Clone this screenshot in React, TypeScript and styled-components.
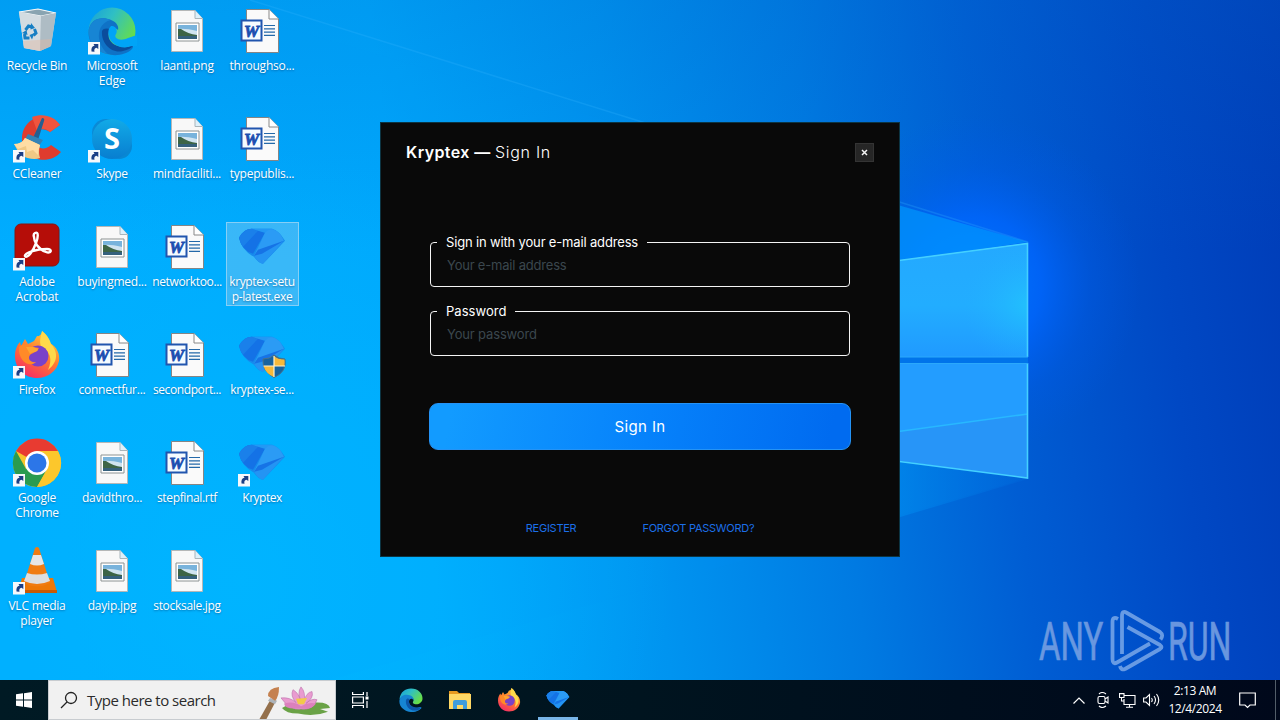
import * as React from 'react';
import styled, { createGlobalStyle } from 'styled-components';

const GlobalStyle = createGlobalStyle`
    html, body, #root {
        margin: 0;
        width: 1280px;
        height: 720px;
        overflow: hidden;
    }

    * {
        box-sizing: border-box;
    }
`;

const Screen = styled.div`
    position: relative;
    display: flex;
    flex-direction: column;
    width: 1280px;
    height: 720px;
    overflow: hidden;
    font-family: 'Open Sans', 'Noto Sans', sans-serif;
    isolation: isolate;
`;

const WallpaperSvg = styled.svg`
    position: absolute;
    inset: 0;
    z-index: -1;
`;

const Desktop = styled.main`
    position: relative;
    flex: 1;
    min-height: 0;
`;

const IconGrid = styled.div`
    display: grid;
    grid-template-columns: repeat(4, 75px);
    grid-template-rows: repeat(6, 108px);
    grid-auto-flow: column;
    width: 300px;
`;

const IconCell = styled.div<{ $selected?: boolean }>`
    display: flex;
    flex-direction: column;
    align-items: center;
    justify-self: center;
    width: 73px;
    height: 84px;
    margin: 6px 0 0 -1px;
    padding-top: 1px;
    ${props => props.$selected ? `
        background: rgba(135, 200, 240, 0.42);
        box-shadow: inset 0 0 0 1px rgba(160, 215, 245, 0.75);
    ` : ''}
`;

const IconLabel = styled.div<{ $spacing?: number }>`
    width: 76px;
    margin-top: 3px;
    color: #ffffff;
    font-size: 12px;
    line-height: 15px;
    letter-spacing: ${props => props.$spacing ?? -0.2}px;
    text-align: center;
    white-space: pre;
    text-shadow: 0 1px 2px rgba(0, 40, 90, 0.45);
`;

const Watermark = styled.svg`
    position: absolute;
    left: 1034px;
    top: 594px;
`;

const Dialog = styled.section`
    position: absolute;
    left: 380px;
    top: 122px;
    display: flex;
    flex-direction: column;
    width: 520px;
    height: 435px;
    padding: 19px 25px 0;
    border: 1px solid #0c3442;
    background: #090909;
    color: #ffffff;
    font-family: 'Inter', 'Open Sans', sans-serif;
`;

const DialogHeader = styled.header`
    display: flex;
    align-items: center;
    justify-content: space-between;
    height: 20px;
`;

const DialogTitle = styled.h1`
    margin: 0;
    font-size: 16px;
    font-weight: 600;
    line-height: 20px;
    letter-spacing: 0.4px;
    white-space: nowrap;
`;

const TitleAction = styled.span`
    font-weight: 300;
    letter-spacing: 0.7px;
`;

const CloseButton = styled.button`
    display: flex;
    align-items: center;
    justify-content: center;
    width: 19px;
    height: 19px;
    padding: 0;
    border: 1px solid #343434;
    background: #262626;
`;

const Form = styled.form`
    display: flex;
    flex-direction: column;
    margin: 72px 23px 0;
`;

const Field = styled.fieldset`
    height: 53px;
    min-width: 0;
    margin: 0 1px 16px;
    padding: 0 16px 0 6px;
    border: 1px solid #f4f4f4;
    border-radius: 4px;
`;

const Legend = styled.legend<{ $spacing: number }>`
    height: 17px;
    padding: 0 9px;
    font-size: 13px;
    line-height: 16px;
    letter-spacing: ${props => props.$spacing}px;
`;

const Input = styled.input<{ $spacing: number }>`
    display: block;
    width: 100%;
    height: 20px;
    margin-top: 4px;
    padding: 0 0 0 10px;
    border: 0;
    outline: 0;
    background: transparent;
    color: #ffffff;
    font-family: inherit;
    font-size: 13px;
    letter-spacing: ${props => props.$spacing}px;

    &::placeholder {
        color: #3b474e;
        opacity: 1;
    }
`;

const SubmitButton = styled.button`
    height: 47px;
    margin-top: 31px;
    padding: 0;
    border: 1px solid #2593f5;
    border-radius: 9px;
    background: linear-gradient(100deg, #129bff 5%, #0682fb 52%, #006bf0 95%);
    color: #ffffff;
    font-family: inherit;
    font-size: 15px;
    letter-spacing: 0.4px;
`;

const DialogLinks = styled.nav`
    display: flex;
    justify-content: center;
    gap: 66px;
    margin-top: 71px;
`;

const DialogLink = styled.a<{ $spacing: number }>`
    color: #1c6fe8;
    font-size: 11px;
    line-height: 14px;
    letter-spacing: ${props => props.$spacing}px;
`;

const Taskbar = styled.footer`
    display: flex;
    align-items: stretch;
    height: 40px;
    background: linear-gradient(90deg, #001a24, #00141f 50%, #00081b);
    color: #ffffff;
`;

const StartButton = styled.div`
    display: flex;
    align-items: center;
    justify-content: center;
    width: 48px;
`;

const SearchBox = styled.div`
    display: flex;
    align-items: center;
    width: 288px;
    padding-left: 11px;
    border: 1px solid #c8ccd0;
    background: #f1f1f1;
    color: #2b2b2b;
`;

const SearchText = styled.span`
    width: 172px;
    margin-left: 9px;
    font-size: 15px;
    letter-spacing: -0.5px;
    white-space: nowrap;
`;

const SearchArt = styled.svg`
    align-self: flex-end;
`;

const TaskButton = styled.div<{ $active?: boolean, $wide?: boolean }>`
    display: flex;
    align-items: center;
    justify-content: center;
    width: ${props => props.$active ? 40 : 49}px;
    margin-left: ${props => props.$active ? 5 : 0}px;
    margin-right: ${props => props.$wide ? 1 : 0}px;
    box-shadow: ${props => props.$active ? 'inset 0 -3px #78b5e8' : 'none'};
`;

const Tray = styled.div`
    display: flex;
    align-items: center;
    margin-left: auto;
`;

const TrayIcon = styled.div<{ $width: number }>`
    display: flex;
    align-items: center;
    justify-content: center;
    width: ${props => props.$width}px;
`;

const Clock = styled.div`
    width: 64px;
    font-size: 12px;
    line-height: 18px;
    letter-spacing: -0.4px;
    text-align: center;
`;

const ShowDesktop = styled.div`
    width: 5px;
    height: 40px;
    margin-left: 8px;
    border-left: 1px solid #525d69;
`;

const Wallpaper = () => (
    <WallpaperSvg width="1280" height="720" viewBox="0 0 1280 720">
        <defs>
            <linearGradient id="sky" gradientUnits="userSpaceOnUse" x1="0" y1="0" x2="1300" y2="-150">
                <stop offset="0" stopColor="#00aeff" />
                <stop offset=".28" stopColor="#00a9fd" />
                <stop offset=".45" stopColor="#0094f0" />
                <stop offset=".6" stopColor="#007ae2" />
                <stop offset=".73" stopColor="#005dd3" />
                <stop offset=".86" stopColor="#0048c4" />
                <stop offset="1" stopColor="#0039b4" />
            </linearGradient>
            <linearGradient id="skyShade" x1="0" y1="0" x2="0" y2="1">
                <stop offset="0" stopColor="#0067c8" stopOpacity=".22" />
                <stop offset=".35" stopColor="#0067c8" stopOpacity="0" />
            </linearGradient>
            <radialGradient id="leftGlow" gradientUnits="userSpaceOnUse" cx="240" cy="580" r="430">
                <stop offset="0" stopColor="#00b8ff" stopOpacity=".85" />
                <stop offset="1" stopColor="#00b8ff" stopOpacity="0" />
            </radialGradient>
            <radialGradient id="windowGlow" gradientUnits="userSpaceOnUse" cx="0" cy="0" r="1" gradientTransform="translate(975 285) scale(165 170)">
                <stop offset="0" stopColor="#0078ff" />
                <stop offset=".4" stopColor="#0066ff" stopOpacity=".8" />
                <stop offset=".7" stopColor="#005cf0" stopOpacity=".3" />
                <stop offset="1" stopColor="#0058e8" stopOpacity="0" />
            </radialGradient>
            <linearGradient id="topPane" x1="0" y1="0" x2="0" y2="1">
                <stop offset="0" stopColor="#24a9ff" />
                <stop offset=".55" stopColor="#22adff" />
                <stop offset="1" stopColor="#209aff" />
            </linearGradient>
            <radialGradient id="paneGlow" gradientUnits="userSpaceOnUse" cx="1028" cy="305" r="65">
                <stop offset="0" stopColor="#22c8fc" stopOpacity=".7" />
                <stop offset="1" stopColor="#22b0ff" stopOpacity="0" />
            </radialGradient>
            <linearGradient id="lowerRay" gradientUnits="userSpaceOnUse" x1="890" y1="0" x2="1028" y2="0">
                <stop offset="0" stopColor="#0091f2" stopOpacity=".55" />
                <stop offset="1" stopColor="#0078e8" stopOpacity=".15" />
            </linearGradient>
        </defs>
        <rect width="1280" height="720" fill="url(#sky)" />
        <rect width="1280" height="720" fill="url(#skyShade)" />
        <rect width="1280" height="720" fill="url(#leftGlow)" />
        <rect width="1280" height="720" fill="url(#windowGlow)" />
        <path d="M190 0L1028 242V478L330 680H0V0Z" fill="#00a4ff" opacity=".05" />
        <path d="M880 200L1028 242L880 264Z" fill="#009cff" opacity=".6" />
        <path d="M880 458L1028 479L880 523Z" fill="url(#lowerRay)" />
        <path d="M250 0L1028 242" stroke="#35b5ff" strokeWidth="1.5" opacity=".25" />
        <path d="M880 262L1028 243V478L880 458Z" fill="#0074ea" />
        <path d="M880 263L1028 243V357H880Z" fill="url(#topPane)" />
        <path d="M880 263L1028 243V357H880Z" fill="url(#paneGlow)" />
        <path d="M880 363H1028V478L880 458Z" fill="#239dff" />
        <path d="M880 434L1028 414V478L880 458Z" fill="#2795f8" />
        <path d="M880 434L1028 414" stroke="#28b8ff" strokeWidth="1.5" />
        <path d="M880 263L1027.500 243.500V357M1027.500 363V478L880 459" fill="none" stroke="#44d0ff" strokeWidth="1.600" />
        <path d="M880 357H1028M880 363.500H1028" stroke="#2ba9fb" />
    </WallpaperSvg>
);

const ShortcutArrow = () => (
    <g>
        <path d="M0 35H12V47.500H0Z" fill="#f6f8fb" />
        <path d="M3.500 44.500C3 41 4 39 6.500 38.700L5.500 37H10.300V42L8.500 40.800C6.500 41.300 6 42.500 6.500 44.700Z" fill="#1c3f85" />
    </g>
);

const EdgeArt = () => (
    <g>
        <circle cx="24" cy="24" r="23.500" fill="url(#edgeGreen)" />
        <path d="M.7 23C3 11 14 9 23 13C29 15 31 20 30 23C25 18 18 23 20 31C22 40 33 43 42 39C45 38 46 40 44 42C36 50 20 50 10 43C2 38 0 30 .7 23Z" fill="#0f72c6" />
        <path d="M14 24C13 37 24 47 35 44C40 43 43 41 45 39C41 40 36 41 30 39C22 37 18 29 22 22C19 21 15 21 14 24Z" fill="#0b4d9c" />
        <path d="M.7 23C3 11 14 9 23 13C18 14 12 18 11 26C10 34 14 42 20 47C7 45 0 35 .7 23Z" fill="#1785d4" />
        <path d="M23 19C28 18 30 24 28 27C25 31 32 35 40 31L49 28V39L43 39C34 43 23 38 21 29C20 25 20 22 23 19Z" fill="#00a4f7" />
    </g>
);

const EdgeSmall = () => (
    <svg width="24" height="24" viewBox="0 0 48 48">
        <path d="M1 22C3 8 12 1 24 1C38 1 48 11 47 22C46 30 38 34 31 32C27 31 27 28 29 26C30 20 26 18 22 20C14 16 7 17 1 22Z" fill="url(#edgeGreen)" />
        <path d="M1 24C3 14 14 11 23 15C28 17 30 22 29 25C27 19 19 21 20 29C22 38 33 42 42 38C45 37 46 40 43 42C33 51 18 49 10 43C2 38 0 30 1 24Z" fill="#1685d2" />
        <path d="M14 24C12 36 22 47 35 45C40 44 43 41 44 38C40 40 35 40 30 38C22 36 18 29 21 22C18 20 15 21 14 24Z" fill="#0c56a8" />
    </svg>
);

const FirefoxArt = () => (
    <g>
        <path d="M24 5C27 6 29 2 29 0C34 4 36 8 37 12C44 16 47 23 46 30C44 40 35 47 24 47C12 47 2 38 2 25C2 19 4 14 7 11L8 15L12 8L15 13L21 10Z" fill="url(#fireBody)" />
        <path d="M29 0C35 5 37 9 38 13C47 23 43 33 35 39C40 28 37 20 28 15C26 10 28 5 29 0Z" fill="#ffd94a" />
        <circle cx="25" cy="25" r="10.500" fill="#7942c9" />
        <path d="M6 16C12 11 17 14 20 16L26 17C24 21 19 22 17 24C14 28 18 32 23 31C17 37 5 31 6 16Z" fill="#ff8a28" />
        <path d="M17 23C20 20 25 22 25 18L20 16L13 16Z" fill="#ffa52f" />
    </g>
);

const KryptexArt = () => (
    <g transform="translate(0 .8)">
        <path d="M1 14Q6 5 14 5H34Q41 7 47 17L25 40Q20 39 16 33Q4 27 1 14Z" fill="#168bed" />
        <path d="M1 14Q6 5 14 5L27 9L15 30Q4 27 1 14Z" fill="#1472e6" />
        <path d="M1 14Q6 5 14 5L20 7L5 23Q2 19 1 14Z" fill="#1a80ea" />
        <path d="M14 5H34Q40 7 44 13L27 9Z" fill="#2398f4" />
        <path d="M27 9Q33 2 42 10L46 17L16 32Z" fill="#2b9bf5" />
        <path d="M46 17L25 40Q20 39 16 32Z" fill="#2494f3" />
        <path d="M46 17L24 30L16 32L20 26Z" fill="#1673e6" />
    </g>
);

const ImageFileArt = () => (
    <g>
        <path d="M8.500 3.500H32L39.500 11.500V44.500H8.500Z" fill="#f8f8f8" stroke="#b5b7b7" />
        <path d="M32 3.500V11.500H39.500" fill="#ddf0fa" stroke="#a9b5bb" />
        <path d="M13 16H36V34H13Z" fill="#fff" stroke="#8c9292" />
        <path d="M15 18H34V32H15Z" fill="#78b3dc" />
        <path d="M15 22Q22 21 34 24V28H15Z" fill="#cfe3f0" />
        <path d="M15 22L18 22Q25 27 34 28V29.500H15Z" fill="#3d6446" />
        <path d="M15 29H34V32H15Z" fill="#35607c" />
    </g>
);

const WordArt = () => (
    <g>
        <path d="M8.500 2.500H31L40.500 12V45.500H8.500Z" fill="#fafafa" stroke="#858585" />
        <path d="M31 2.500V12H40.500" fill="#fff" stroke="#888" />
        <path d="M26 18.500H37M26 21.800H37M26 25.100H37M26 28.400H37" stroke="#2469a9" strokeWidth="1.200" />
        <rect x="3.500" y="13.500" width="20" height="20" fill="#f5fbff" stroke="#2155ae" strokeWidth="2" />
        <text x="13.500" y="29.500" fill="#1c4eb0" stroke="#1c4eb0" strokeWidth=".8" fontFamily="Liberation Serif, serif" fontSize="17" fontWeight="bold" fontStyle="italic" textAnchor="middle">W</text>
    </g>
);

const RecycleArt = () => (
    <g>
        <path d="M6 5L25 2L43 6L38 39L27 44L11 41Z" fill="#c8d3da" />
        <path d="M6 5L25 2L43 6L28 9Z" fill="#89a4b1" stroke="#f4f8fa" strokeWidth="1.200" />
        <path d="M6 5L28 9L27 44L11 41Z" fill="#d3dce1" />
        <path d="M28 9L43 6L38 39L27 44Z" fill="#aebcc4" />
        <path d="M10 34L38 32L37 40L27 44L11 41Z" fill="#e1b7a5" opacity=".45" />
        <path d="M12.500 23L15.500 19L19 20M21.500 22L23 26L20.500 28.500M16.500 31H12L11.500 27" fill="none" stroke="#167fc4" strokeWidth="3" />
        <path d="M18 16L22 21L17.500 22.500ZM21.500 26L19 32.500L16.500 28ZM9 26L13.500 23L14.500 28Z" fill="#167fc4" />
    </g>
);

const CCleanerArt = () => (
    <g>
        <path d="M47 10L37 17C28 11 21 16 21 24C22 34 32 36 38 30L48 37C36 51 10 46 9 24C9 2 35-6 47 10Z" fill="#df3c2e" />
        <path d="M47 10L37 17C32 13 28 13 24 16L19 2C30-2 41 1 47 10Z" fill="#f0543e" />
        <path d="M29 3Q32 3 31 6L25 25L20 23Z" fill="#245f91" />
        <path d="M15 19L30 25L26 31L12 24Z" fill="#3383b7" />
        <path d="M12 23L27 30Q25 38 27 43Q19 46 7 40L1 29Q9 29 12 23Z" fill="#f1c985" />
        <path d="M12 23L27 30Q25 35 25 40L20 35L14 37L13 31L5 34L1 29Q9 29 12 23Z" fill="#ffdda4" />
    </g>
);

const SkypeArt = () => (
    <g>
        <circle cx="18" cy="18" r="14" fill="#0a8ad6" />
        <circle cx="31" cy="31" r="13" fill="#0987d2" />
        <circle cx="24" cy="24" r="20" fill="url(#skypeBlue)" />
        <text x="24" y="34" fill="#fff" fontFamily="Open Sans, sans-serif" fontSize="29" fontWeight="bold" textAnchor="middle">S</text>
    </g>
);

const AcrobatArt = () => (
    <g>
        <rect x="2" y="1" width="44" height="42" rx="6" fill="#b50d08" stroke="#871511" />
        <path d="M22 10C26 8 25 15 23 20C20 29 14 36 12 33C11 30 23 26 34 26C40 26 38 31 33 29C25 26 21 19 21 14Q20 11 22 10Z" fill="none" stroke="#fff" strokeWidth="2.400" />
    </g>
);

const ChromeArt = () => (
    <g>
        <circle cx="24" cy="24" r="24" fill="#f7c52b" />
        <path d="M24 24L3 12A24 24 0 0 1 45 12H24Z" fill="#e83b31" />
        <path d="M3 12A24 24 0 0 0 24 48L34 30L24 24L13 30Z" fill="#2a9b50" />
        <path d="M24 12H45A24 24 0 0 1 24 48L35 29Z" fill="#fcc72c" />
        <circle cx="24" cy="24" r="12" fill="#fff" />
        <circle cx="24" cy="24" r="9.500" fill="#2c76e8" />
    </g>
);

const VlcArt = () => (
    <g>
        <path d="M9 31H40L44 45H5Z" fill="#ed7807" />
        <path d="M5 43H44V46H5Z" fill="#c95a05" />
        <path d="M22 1Q24-1 26 1L37 36Q24 43 11 36Z" fill="#f07c12" />
        <path d="M20 8H28L31 17Q24 20 17 17Z" fill="#e6e6e6" />
        <path d="M14 26Q24 29 34 26L37 34Q24 40 11 34Z" fill="#dedede" />
    </g>
);

const ShieldArt = () => (
    <g>
        <path d="M36 24Q41 28 47 28Q49 41 36 46.500Q24 40 25 28Q32 28 36 24Z" fill="#17639f" stroke="#4a7087" strokeWidth="1" />
        <path d="M36 25V35H46.500Q47 31 46.500 28.500Q40 28.500 36 25ZM36 35H25.500Q28 43 36 46Z" fill="#f5b93b" />
        <path d="M25.500 35H47M36 25V46" stroke="#fff4cf" strokeWidth="1.200" />
    </g>
);

const art = {
    recycle: RecycleArt,
    edge: EdgeArt,
    image: ImageFileArt,
    word: WordArt,
    ccleaner: CCleanerArt,
    skype: SkypeArt,
    acrobat: AcrobatArt,
    firefox: FirefoxArt,
    chrome: ChromeArt,
    vlc: VlcArt,
    kryptex: KryptexArt,
};

type ArtName = keyof typeof art;

type IconProps = {
    name: ArtName,
    size?: number,
    shortcut?: boolean,
    shield?: boolean
};

const Icon: React.FC<IconProps> = ({ name, size = 48, shortcut, shield }) => {
    const Art = art[name];

    return (
        <svg width={size} height={size} viewBox="0 0 48 48" overflow="visible">
            <defs>
                <linearGradient id="edgeGreen" x1="0" y1="0" x2="1" y2=".6">
                    <stop offset="0" stopColor="#159edb" />
                    <stop offset=".45" stopColor="#2fbfc4" />
                    <stop offset="1" stopColor="#69df45" />
                </linearGradient>
                <linearGradient id="fireBody" x1=".8" y1="0" x2=".25" y2="1">
                    <stop offset="0" stopColor="#ffd83a" />
                    <stop offset=".5" stopColor="#ff7830" />
                    <stop offset="1" stopColor="#f52b67" />
                </linearGradient>
                <linearGradient id="skypeBlue" x1="0" y1="0" x2="0" y2="1">
                    <stop offset="0" stopColor="#12aae7" />
                    <stop offset="1" stopColor="#087ed0" />
                </linearGradient>
            </defs>
            <Art />
            {shortcut && <ShortcutArrow />}
            {shield && <ShieldArt />}
        </svg>
    );
};

type DesktopItem = {
    label: string,
    name: ArtName,
    spacing?: number,
    shortcut?: boolean,
    shield?: boolean,
    selected?: boolean
};

//Ordered column by column, same as the grid flow
const items: DesktopItem[] = [
    { label: 'Recycle Bin', name: 'recycle' },
    { label: 'CCleaner', name: 'ccleaner', shortcut: true },
    { label: 'Adobe\nAcrobat', name: 'acrobat', shortcut: true, spacing: -0.1 },
    { label: 'Firefox', name: 'firefox', shortcut: true, spacing: -0.3 },
    { label: 'Google\nChrome', name: 'chrome', shortcut: true },
    { label: 'VLC media\nplayer', name: 'vlc', shortcut: true },
    { label: 'Microsoft\nEdge', name: 'edge', shortcut: true },
    { label: 'Skype', name: 'skype', shortcut: true, spacing: -0.3 },
    { label: 'buyingmed...', name: 'image', spacing: -0.25 },
    { label: 'connectfur...', name: 'word', spacing: -0.25 },
    { label: 'davidthro...', name: 'image', spacing: -0.3 },
    { label: 'dayip.jpg', name: 'image' },
    { label: 'laanti.png', name: 'image' },
    { label: 'mindfaciliti...', name: 'image' },
    { label: 'networktoo...', name: 'word', spacing: -0.35 },
    { label: 'secondport...', name: 'word', spacing: -0.4 },
    { label: 'stepfinal.rtf', name: 'word', spacing: -0.35 },
    { label: 'stocksale.jpg', name: 'image', spacing: -0.3 },
    { label: 'throughso...', name: 'word', spacing: -0.2 },
    { label: 'typepublis...', name: 'word', spacing: -0.25 },
    { label: 'kryptex-setu\np-latest.exe', name: 'kryptex', selected: true, spacing: -0.35 },
    { label: 'kryptex-se...', name: 'kryptex', shield: true, spacing: -0.3 },
    { label: 'Kryptex', name: 'kryptex', shortcut: true, spacing: -0.5 },
];

const AnyRun = () => (
    <Watermark width="240" height="86" viewBox="1034 594 240 86">
        <g fill="#759fe2" stroke="#759fe2" strokeWidth=".7" opacity=".9" fontFamily="Roboto, sans-serif" fontSize="53">
            <text transform="translate(1039 659.500) scale(.62 1)">ANY</text>
            <text transform="translate(1168 659.500) scale(.605 1)">RUN</text>
        </g>
        <g fill="none" stroke="#73a3e7" strokeWidth="3.800" strokeLinejoin="round" opacity=".9">
            <path d="M1118 619Q1112.500 616 1112.500 622V659Q1112.500 665 1117 662.500L1150 643.500" />
            <path d="M1122 654V616Q1122 610 1127 613L1160 632Q1164 635 1160.500 639.500" />
            <path d="M1127.500 627L1160 645Q1163 647 1160 649L1125 669Q1121 670.500 1120 666" />
        </g>
    </Watermark>
);

const LotusArt = () => (
    <SearchArt width="74" height="33" viewBox="0 0 74 36" preserveAspectRatio="none">
        <path d="M12 14L17 16L7 37H0Z" fill="#94704c" />
        <path d="M11 13L18 16L16 20L9 16Z" fill="#adb4ba" />
        <path d="M9 11Q9 2 20 1Q20 12 16 16Z" fill="#c5814f" />
        <path d="M23 24Q36 15 55 18Q70 17 71 24L61 25L69 28Q55 34 39 30Q27 30 23 24Z" fill="#6aa246" />
        <path d="M42 25Q31 27 22 13Q31 12 37 18Q31 11 34 4Q40 8 42 17Q38 7 42 1Q47 7 45 17Q47 7 53 6Q55 13 47 19Q53 13 58 15Q54 27 42 25Z" fill="#e99bd0" stroke="#c276b1" strokeWidth=".7" />
        <path d="M41 24Q26 26 25 19Q35 16 42 22Q49 17 57 19Q52 27 41 24Z" fill="#dc80bd" />
        <path d="M37 14L48 13L45 20H39Z" fill="#f2c94a" />
    </SearchArt>
);

const ExplorerArt = () => (
    <svg width="22" height="20" viewBox="0 0 22 20">
        <path d="M0 1H8L10 3H21V18H0Z" fill="#e79a20" />
        <path d="M0 4H22V19H0Z" fill="#ffd865" />
        <path d="M4 19V12Q4 10 6 10H16Q18 10 18 12V19H14V15H8V19Z" fill="#409cdc" />
    </svg>
);

const App = () => (
    <Screen>
        <GlobalStyle />
        <Wallpaper />
        <Desktop>
            <IconGrid>
                {items.map(({ label, name, spacing, shortcut, shield, selected }) => (
                    <IconCell key={label} $selected={selected}>
                        <Icon name={name} shortcut={shortcut} shield={shield} />
                        <IconLabel $spacing={spacing}>{label}</IconLabel>
                    </IconCell>
                ))}
            </IconGrid>
            <AnyRun />
            <Dialog>
                <DialogHeader>
                    <DialogTitle>Kryptex — <TitleAction>Sign In</TitleAction></DialogTitle>
                    <CloseButton type="button" aria-label="Close">
                        <svg width="7" height="7" viewBox="0 0 7 7">
                            <path d="M1 1L6 6M6 1L1 6" stroke="#f5f5f5" strokeWidth="1.500" />
                        </svg>
                    </CloseButton>
                </DialogHeader>
                <Form>
                    <Field>
                        <Legend $spacing={-0.16}>Sign in with your e-mail address</Legend>
                        <Input $spacing={-0.2} placeholder="Your e-mail address" />
                    </Field>
                    <Field>
                        <Legend $spacing={0.03}>Password</Legend>
                        <Input $spacing={-0.15} placeholder="Your password" />
                    </Field>
                    <SubmitButton type="button">Sign In</SubmitButton>
                </Form>
                <DialogLinks>
                    <DialogLink $spacing={-0.25}>REGISTER</DialogLink>
                    <DialogLink $spacing={-0.28}>FORGOT PASSWORD?</DialogLink>
                </DialogLinks>
            </Dialog>
        </Desktop>
        <Taskbar>
            <StartButton>
                <svg width="16" height="16" viewBox="0 0 16 16" fill="#fff">
                    <path d="M0 2.300L7 1.300V7.500H0ZM8 1.200L16 0V7.500H8ZM0 8.500H7V14.700L0 13.700ZM8 8.500H16V16L8 14.800Z" />
                </svg>
            </StartButton>
            <SearchBox>
                <svg width="18" height="18" viewBox="0 0 18 18" fill="none" stroke="#222" strokeWidth="1.300">
                    <circle cx="11" cy="7" r="5.500" />
                    <path d="M7 11L1 17" />
                </svg>
                <SearchText>Type here to search</SearchText>
                <LotusArt />
            </SearchBox>
            <TaskButton $wide>
                <svg width="17" height="16" viewBox="0 0 17 16" fill="none" stroke="#fff" strokeWidth="1.200">
                    <path d="M.6 0V2.500H11.400V0M.6 16V13.500H11.400V16M.6 5H11.400V11H.6ZM15 0V4M15 9V16" />
                    <path d="M13.500 4.500H16.500V7.500H13.500Z" fill="#fff" stroke="none" />
                </svg>
            </TaskButton>
            <TaskButton><EdgeSmall /></TaskButton>
            <TaskButton><ExplorerArt /></TaskButton>
            <TaskButton><Icon name="firefox" size={24} /></TaskButton>
            <TaskButton $active><Icon name="kryptex" size={24} /></TaskButton>
            <Tray>
                <TrayIcon $width={24}>
                    <svg width="12" height="7" viewBox="0 0 12 7" fill="none" stroke="#fff" strokeWidth="1.200">
                        <path d="M.5 6.500L6 1L11.500 6.500" />
                    </svg>
                </TrayIcon>
                <TrayIcon $width={24}>
                    <svg width="12" height="16" viewBox="0 0 12 16" fill="none" stroke="#fff" strokeWidth="1.100">
                        <rect x="1" y="4.500" width="7" height="7" rx="1.500" />
                        <path d="M8 7L11 5V11L8 9M2 2Q5-1 9 2M2 14Q5 17 9 14" />
                    </svg>
                </TrayIcon>
                <TrayIcon $width={24}>
                    <svg width="17" height="15" viewBox="0 0 17 15" fill="none" stroke="#fff" strokeWidth="1.100">
                        <path d="M5 2.500H16V11.500H5V6M10.500 11.500V14M7 14.200H14M.5 .6H5V4.500H.5ZM2.500 4.500V8H5" />
                    </svg>
                </TrayIcon>
                <TrayIcon $width={24}>
                    <svg width="17" height="14" viewBox="0 0 17 14" fill="none" stroke="#fff" strokeWidth="1.100">
                        <path d="M.6 5H3L6.500 1.500V12.500L3 9H.6ZM8.500 5Q10 7 8.500 9M11 3Q14 7 11 11M13.500 1Q18 7 13.500 13" />
                    </svg>
                </TrayIcon>
                <Clock>2:13 AM<br />12/4/2024</Clock>
                <TrayIcon $width={40}>
                    <svg width="17" height="17" viewBox="0 0 17 17" fill="none" stroke="#fff" strokeWidth="1.200">
                        <path d="M.7 1H16.300V13H11L8.500 15.500L6 13H.7Z" />
                    </svg>
                </TrayIcon>
                <ShowDesktop />
            </Tray>
        </Taskbar>
    </Screen>
);

export default App;
